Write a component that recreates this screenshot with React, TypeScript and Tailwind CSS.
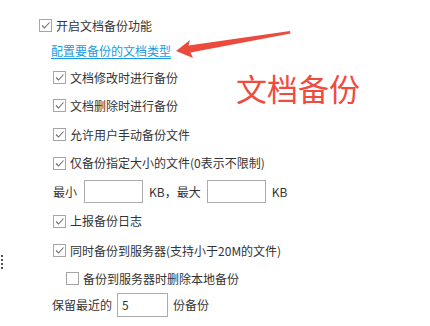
import React from "react";

const font = { fontFamily: '"Noto Sans CJK SC", "Microsoft YaHei", sans-serif' };

function Box({ checked = true }: { checked?: boolean }) {
  return (
    <span className="flex h-[13px] w-[13px] shrink-0 items-center justify-center border border-[#a5a5a5] bg-white">
      {checked && (
        <svg width="11" height="11" viewBox="0 0 11 11">
          <path d="M2 5.5 L4.5 8 L9.5 2.5" fill="none" stroke="#707070" strokeWidth="1.1" />
        </svg>
      )}
    </span>
  );
}

function CheckRow({ h, pl, label, checked = true }: { h: string; pl: string; label: string; checked?: boolean }) {
  return (
    <div className={`flex items-center gap-[4px] ${h} ${pl}`}>
      <Box checked={checked} />
      <span className="leading-none">{label}</span>
    </div>
  );
}

export default function App() {
  return (
    <div
      className="relative h-[326px] w-[430px] overflow-hidden bg-white pt-[13px] text-[12px] text-[#333333]"
      style={font}
    >
      <CheckRow h="h-[25px]" pl="pl-[39px]" label="开启文档备份功能" />
      <div className="flex h-[26px] items-center pl-[51px]">
        <span className="leading-none text-[#1a9be0] underline underline-offset-[2px]">配置要备份的文档类型</span>
      </div>
      <CheckRow h="h-[27px]" pl="pl-[53px]" label="文档修改时进行备份" />
      <CheckRow h="h-[29px]" pl="pl-[53px]" label="文档删除时进行备份" />
      <CheckRow h="h-[29px]" pl="pl-[53px]" label="允许用户手动备份文件" />
      <CheckRow h="h-[28px]" pl="pl-[53px]" label="仅备份指定大小的文件(0表示不限制)" />
      <div className="flex h-[29px] items-center pl-[53px]">
        <span className="leading-none">最小</span>
        <span className="ml-[7px] h-[23px] w-[59px] border border-[#ababab] bg-white" />
        <span className="ml-[6px] leading-none">KB，最大</span>
        <span className="ml-[6px] h-[23px] w-[59px] border border-[#ababab] bg-white" />
        <span className="ml-[6px] leading-none">KB</span>
      </div>
      <CheckRow h="h-[30px]" pl="pl-[53px]" label="上报备份日志" />
      <CheckRow h="h-[29px]" pl="pl-[53px]" label="同时备份到服务器(支持小于20M的文件)" />
      <CheckRow h="h-[27px]" pl="pl-[66px]" label="备份到服务器时删除本地备份" checked={false} />
      <div className="flex h-[26px] items-center pl-[52px]">
        <span className="leading-none">保留最近的</span>
        <span className="ml-[5px] flex h-[24px] w-[51px] items-center border border-[#ababab] bg-white pl-[4px] leading-none">
          5
        </span>
        <span className="ml-[5px] leading-none">份备份</span>
      </div>

      {/* annotation arrow */}
      <svg className="absolute left-0 top-0" width="430" height="326" viewBox="0 0 430 326">
        <polygon
          points="176,51 190,40 188.5,45.5 290,31 290.5,33.5 190.5,52.5 193,58"
          fill="#ec4a3d"
        />
      </svg>
      <div className="absolute left-[236px] top-[72px] text-[31px] leading-none text-[#ef4b3f]">文档备份</div>

      {/* splitter dots */}
      <div className="absolute left-[1px] top-[255px] flex flex-col gap-[2px]">
        <span className="h-[2px] w-[2px] bg-[#555]" />
        <span className="h-[2px] w-[2px] bg-[#555]" />
        <span className="h-[2px] w-[2px] bg-[#555]" />
        <span className="h-[2px] w-[2px] bg-[#555]" />
      </div>
    </div>
  );
}
